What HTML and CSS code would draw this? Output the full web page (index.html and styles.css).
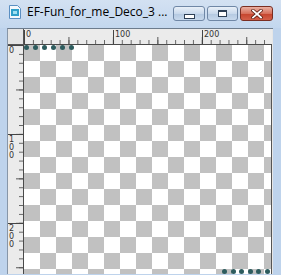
FILE: index.html
```html
<!DOCTYPE html>
<html lang="en">
<head>
    <meta charset="UTF-8">
    <title>EF-Fun_for_me_Deco_3</title>
    <link rel="stylesheet" href="styles.css">
</head>
<body>
    <div class="window">
        <div class="titlebar">
            <svg class="app-icon" width="14" height="14" viewBox="0 0 14 14">
                <path d="M1.5 0.5h8l3 3v10h-11z" fill="#f4f8fc" stroke="#5b8fc2"/>
                <rect x="3" y="4" width="8" height="7" fill="#2f9fc9"/>
                <rect x="5" y="6" width="4" height="3" fill="#9fe0f2"/>
            </svg>
            <span class="title">EF-Fun_for_me_Deco_3 ...</span>
            <div class="controls">
                <div class="btn"><span class="glyph-min"></span></div>
                <div class="btn btn-max"><span class="glyph-max"></span></div>
                <div class="btn btn-close">
                    <svg width="12" height="10" viewBox="0 0 12 10">
                        <path d="M2 1.5l8 7M10 1.5l-8 7" stroke="#5a1d12" stroke-width="3.4" stroke-linecap="square"/>
                        <path d="M2 1.5l8 7M10 1.5l-8 7" stroke="#fff" stroke-width="1.8" stroke-linecap="square"/>
                    </svg>
                </div>
            </div>
        </div>

        <div class="client">
            <div class="corner"></div>

            <!-- top ruler, 0.89px per unit -->
            <svg class="ruler ruler-top" width="248" height="16">
                <defs>
                    <pattern id="tick-h" width="8.89" height="16" patternUnits="userSpaceOnUse">
                        <rect x="0" y="11" width="1" height="4" fill="#666"/>
                    </pattern>
                    <pattern id="tick-h50" width="44.45" height="16" patternUnits="userSpaceOnUse">
                        <rect x="0" y="8" width="1" height="7" fill="#555"/>
                    </pattern>
                </defs>
                <rect width="248" height="15" fill="url(#tick-h)"/>
                <rect width="248" height="15" fill="url(#tick-h50)"/>
                <rect x="0" y="1" width="1" height="14" fill="#444"/>
                <rect x="89" y="1" width="1" height="14" fill="#444"/>
                <rect x="178" y="1" width="1" height="14" fill="#444"/>
                <text x="2" y="8">0</text>
                <text x="91" y="8">100</text>
                <text x="180" y="8">200</text>
            </svg>

            <!-- left ruler -->
            <svg class="ruler ruler-left" width="16" height="229">
                <defs>
                    <pattern id="tick-v" width="16" height="8.89" patternUnits="userSpaceOnUse">
                        <rect x="11" y="0" width="4" height="1" fill="#666"/>
                    </pattern>
                    <pattern id="tick-v50" width="16" height="44.45" patternUnits="userSpaceOnUse">
                        <rect x="8" y="0" width="7" height="1" fill="#555"/>
                    </pattern>
                </defs>
                <rect width="15" height="229" fill="url(#tick-v)"/>
                <rect width="15" height="229" fill="url(#tick-v50)"/>
                <rect x="0" y="0" width="15" height="1" fill="#444"/>
                <rect x="0" y="89" width="15" height="1" fill="#444"/>
                <rect x="0" y="178" width="15" height="1" fill="#444"/>
                <text x="1" y="8">0</text>
                <text x="1" y="97">1</text>
                <text x="1" y="105">0</text>
                <text x="1" y="113">0</text>
                <text x="1" y="186">2</text>
                <text x="1" y="194">0</text>
                <text x="1" y="202">0</text>
            </svg>

            <div class="canvas">
                <div class="dots">
                    <span class="dot"></span><span class="dot"></span><span class="dot"></span>
                    <span class="dot"></span><span class="dot"></span><span class="dot"></span>
                </div>
                <div class="dots dots-end">
                    <span class="dot"></span><span class="dot"></span><span class="dot"></span>
                    <span class="dot"></span><span class="dot"></span><span class="dot"></span>
                </div>
            </div>
        </div>
    </div>
</body>
</html>
```

FILE: styles.css
```css
body {
    margin: 0;
    background: #fff;
    font-family: "Open Sans", "Noto Sans", sans-serif;
}

.window {
    width: 281px;
    height: 275px;
    overflow: hidden;
    background: #bed3ec;
    display: flex;
    flex-direction: column;
}

.titlebar {
    height: 28px;
    display: flex;
    align-items: flex-start;
    padding-left: 8px;
    background: linear-gradient(#d3e1f2, #c3d7ee);
}

.app-icon {
    margin-top: 5px;
}

.title {
    margin-left: 5px;
    margin-top: 3px;
    font-size: 12px;
    color: #000;
    white-space: nowrap;
}

.controls {
    display: flex;
    gap: 2px;
    margin-left: auto;
    margin-right: 8px;
    margin-top: 6px;
}

.btn {
    width: 32px;
    height: 15px;
    box-sizing: border-box;
    border: 1px solid #6f87a6;
    border-radius: 3px;
    background: linear-gradient(#e9f0f8, #c9d9ec 50%, #b3c8e1 51%, #c7d8ec);
    display: flex;
    justify-content: center;
    align-items: center;
}

.btn-max {
    width: 31px;
}

.btn-close {
    width: 33px;
    border-color: #7a2e22;
    background: linear-gradient(#eab0a3, #d7715c 50%, #c4432c 51%, #d4604a);
}

.glyph-min {
    width: 9px;
    height: 3px;
    margin-top: 5px;
    background: #fff;
    border: 1px solid #2d3f55;
}

.glyph-max {
    width: 7px;
    height: 4px;
    border: 1px solid #2d3f55;
    border-top-width: 2px;
    background: #fff;
    box-shadow: inset 0 0 0 1px #fff;
    outline: 1px solid #fff;
    outline-offset: -3px;
}

.client {
    margin-left: 7px;
    width: 265px;
    display: grid;
    grid-template-columns: 16px 248px;
    grid-template-rows: 16px 229px;
    border-top: 1px solid #6d7c8d;
    border-left: 1px solid #8796a8;
    background: #e6e6e6;
}

.corner {
    background: #e4e4e4;
    border-right: 1px solid #555;
    border-bottom: 1px solid #555;
    box-sizing: border-box;
}

.ruler {
    display: block;
    background: #ebebeb;
}

.ruler text {
    font-family: "DejaVu Sans", sans-serif;
    font-size: 8px;
    fill: #333;
}

.ruler-top {
    border-bottom: 1px solid #4a4a4a;
    box-sizing: border-box;
}

.ruler-left {
    border-right: 1px solid #4a4a4a;
    box-sizing: border-box;
}

.canvas {
    box-sizing: border-box;
    border-right: 1px solid #555;
    background-color: #fff;
    background-image: conic-gradient(#fff 0 25%, #c1c1c1 0 50%, #fff 0 75%, #c1c1c1 0);
    background-size: 32px 32px;
    display: flex;
    flex-direction: column;
    justify-content: space-between;
}

.dots {
    display: flex;
    gap: 4px;
}

.dots-end {
    align-self: flex-end;
    gap: 3.6px;
    margin-right: 1px;
}

.dot {
    width: 5px;
    height: 5px;
    border-radius: 50%;
    background: #2d5c5e;
}
```
